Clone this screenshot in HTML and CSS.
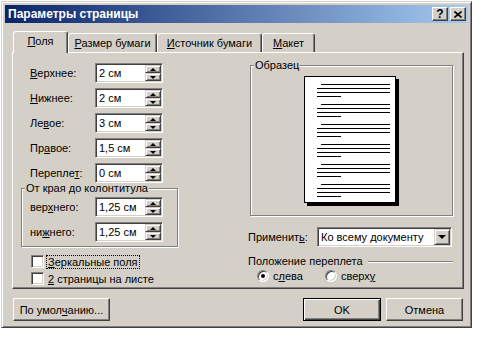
FILE: index.html
```html
<!DOCTYPE html>
<html lang="ru">
<head>
    <meta charset="UTF-8">
    <title>Параметры страницы</title>
    <link rel="stylesheet" href="styles.css">
</head>
<body>
    <div class="window">
        <div class="titlebar">
            <span class="title">Параметры страницы</span>
            <span class="tb-btn help">?</span>
            <span class="tb-btn close">
                <svg width="8" height="7" viewBox="0 0 8 7"><path d="M0.5 0.5L7.5 6.5M7.5 0.5L0.5 6.5" stroke="#000" stroke-width="1.6" fill="none"/></svg>
            </span>
        </div>

        <div class="dlg">
            <div class="tabs">
                <div class="tab sel t1"><u>П</u>оля</div>
                <div class="tab t2"><u>Р</u>азмер бумаги</div>
                <div class="tab t3"><u>И</u>сточник бумаги</div>
                <div class="tab t4"><u>М</u>акет</div>
            </div>

            <div class="panel">
                <div class="col-left">
                    <div class="rows">
                        <div class="row"><span class="lbl"><u>В</u>ерхнее:</span><div class="spin"><span class="spin-val">2 см</span><span class="spin-btns"><span class="sb up"></span><span class="sb down"></span></span></div></div>
                        <div class="row"><span class="lbl"><u>Н</u>ижнее:</span><div class="spin"><span class="spin-val">2 см</span><span class="spin-btns"><span class="sb up"></span><span class="sb down"></span></span></div></div>
                        <div class="row"><span class="lbl">Ле<u>в</u>ое:</span><div class="spin"><span class="spin-val">3 см</span><span class="spin-btns"><span class="sb up"></span><span class="sb down"></span></span></div></div>
                        <div class="row"><span class="lbl">Пр<u>а</u>вое:</span><div class="spin"><span class="spin-val">1,5 см</span><span class="spin-btns"><span class="sb up"></span><span class="sb down"></span></span></div></div>
                        <div class="row"><span class="lbl">Перепле<u>т</u>:</span><div class="spin"><span class="spin-val">0 см</span><span class="spin-btns"><span class="sb up"></span><span class="sb down"></span></span></div></div>
                    </div>

                    <fieldset class="group hf">
                        <legend>От края до колонтитула</legend>
                        <div class="rows">
                            <div class="row"><span class="lbl">вер<u>х</u>него:</span><div class="spin"><span class="spin-val">1,25 см</span><span class="spin-btns"><span class="sb up"></span><span class="sb down"></span></span></div></div>
                            <div class="row"><span class="lbl">ни<u>ж</u>него:</span><div class="spin"><span class="spin-val">1,25 см</span><span class="spin-btns"><span class="sb up"></span><span class="sb down"></span></span></div></div>
                        </div>
                    </fieldset>

                    <div class="checks">
                        <div class="check-row"><span class="checkbox"></span><span class="focus"><u>З</u>еркальные поля</span></div>
                        <div class="check-row"><span class="checkbox"></span><span class="nofocus"><u>2</u> страницы на листе</span></div>
                    </div>
                </div>

                <div class="col-right">
                    <fieldset class="group sample">
                        <legend>Образец</legend>
                        <!-- page preview -->
                        <svg class="page" width="95" height="130" viewBox="0 0 95 130">
                            <rect x="3" y="3" width="92" height="127" fill="#000"/>
                            <rect x="0.5" y="0.5" width="91" height="126" fill="#fff" stroke="#000"/>
                            <path stroke="#000" stroke-width="1" fill="none" d="
                                M17 8.5H86 M13 12.5H86 M13 16.5H86 M13 20.5H37
                                M17 28.5H86 M13 32.5H86 M13 36.5H86 M13 40.5H37
                                M17 48.5H86 M13 52.5H86 M13 56.5H86 M13 60.5H37
                                M17 68.5H86 M13 72.5H86 M13 76.5H86 M13 80.5H37
                                M17 88.5H86 M13 92.5H86 M13 96.5H86 M13 100.5H37
                                M17 108.5H86 M13 112.5H86 M13 116.5H86 M13 120.5H37"/>
                        </svg>
                    </fieldset>

                    <div class="apply-row">
                        <span class="lbl-apply">Применит<u>ь</u>:</span>
                        <div class="combo"><span class="combo-val">Ко всему документу</span><span class="combo-btn"></span></div>
                    </div>

                    <div class="etched-title">Положение переплета</div>
                    <div class="radios">
                        <div class="radio-item first"><span class="radio on"></span><span>с<u>л</u>ева</span></div>
                        <div class="radio-item"><span class="radio"></span><span>сверх<u>у</u></span></div>
                    </div>
                </div>
            </div>

            <div class="buttons">
                <button class="btn btn-def">По умол<u>ч</u>анию...</button>
                <span class="spacer"></span>
                <button class="btn btn-ok default">OK</button>
                <button class="btn btn-cancel">Отмена</button>
            </div>
        </div>
    </div>
</body>
</html>
```

FILE: styles.css
```css
* { box-sizing: border-box; }
body { margin: 0; background: #fff; font-family: "Liberation Sans", Arial, sans-serif; font-size: 11px; color: #000; }
u { text-decoration: underline; text-underline-offset: 1px; }

.window { margin: 1px 0 0 1px; width: 471px; height: 327px; background: #d4d0c8; padding: 3px;
    border: 1px solid; border-color: #d4d0c8 #404040 #404040 #d4d0c8;
    box-shadow: inset 1px 1px 0 #fff, inset -1px -1px 0 #808080; }

.titlebar { height: 18px; display: flex; align-items: center; padding: 0 2px 0 3px;
    background: linear-gradient(to right, #0a246a, #a6caf0); }
.title { flex: 1; color: #fff; font-weight: bold; font-size: 12px; }
.tb-btn { width: 16px; height: 14px; display: flex; align-items: center; justify-content: center; background: #d4d0c8;
    border: 1px solid; border-color: #fff #404040 #404040 #fff; box-shadow: inset -1px -1px 0 #808080; }
.help { margin-right: 2px; font-weight: bold; font-size: 12px; line-height: 12px; }

.dlg { padding: 8px 4px 0 7px; }

.tabs { display: flex; align-items: flex-end; height: 21px; margin-left: 1px; position: relative; z-index: 1; }
.tab { height: 19px; padding-top: 3px; line-height: 12px; text-align: center; background: #d4d0c8;
    border: 1px solid; border-bottom: none; border-color: #fff #404040 transparent #fff;
    border-radius: 3px 3px 0 0; box-shadow: inset -1px 0 0 #808080; }
.tab.sel { height: 22px; margin-bottom: -1px; }
.t1 { width: 55px; }
.t2 { width: 89px; }
.t3 { width: 105px; }
.t4 { width: 53px; }

.panel { height: 237px; display: grid; grid-template-columns: 157px 205px; column-gap: 70px; align-items: start;
    padding: 10px 0 0 8px; border: 1px solid; border-color: #fff #404040 #404040 #fff;
    box-shadow: inset -1px -1px 0 #808080; }

.rows { display: flex; flex-direction: column; gap: 5px; }
.row { display: flex; align-items: center; height: 20px; padding-left: 9px; }
.row .lbl { width: 65px; }

.spin, .combo { display: flex; height: 20px; background: #fff; padding: 1px;
    border: 1px solid; border-color: #808080 #fff #fff #808080;
    box-shadow: inset 1px 1px 0 #404040, inset -1px -1px 0 #d4d0c8; }
.spin { width: 68px; }
.spin-val, .combo-val { flex: 1; padding-left: 2px; line-height: 16px; white-space: nowrap; }
.spin-btns { width: 16px; display: flex; flex-direction: column; }
.sb, .combo-btn { display: flex; align-items: center; justify-content: center; background: #d4d0c8;
    border: 1px solid; border-color: #d4d0c8 #404040 #404040 #d4d0c8;
    box-shadow: inset 1px 1px 0 #fff, inset -1px -1px 0 #808080; }
.sb { flex: 1; }
.sb.up::after { content: ""; border-left: 3px solid transparent; border-right: 3px solid transparent; border-bottom: 3px solid #000; }
.sb.down::after { content: ""; border-left: 3px solid transparent; border-right: 3px solid transparent; border-top: 3px solid #000; }

.group { margin: 0; padding: 0; min-width: 0; border: 1px solid #808080;
    box-shadow: 1px 1px 0 #fff, inset 1px 1px 0 #fff; }
.group legend { padding: 0 1px; margin-left: 3px; line-height: 13px; background: #d4d0c8; }
.hf { margin-top: -1px; padding: 2px 0 4px; }
.hf .row { padding-left: 8px; }

.checks { margin-top: 8px; padding-left: 10px; display: flex; flex-direction: column; gap: 4px; }
.check-row { display: flex; align-items: center; height: 13px; gap: 2px; }
.checkbox { width: 13px; height: 13px; background: #fff; border: 1px solid; border-color: #808080 #fff #fff #808080;
    box-shadow: inset 1px 1px 0 #404040, inset -1px -1px 0 #d4d0c8; }
.focus, .nofocus { padding: 0 1px; line-height: 12px; border: 1px dotted #000; }
.nofocus { border-color: transparent; }

.sample { margin-left: 2px; margin-top: -4px; padding: 4px 0 9px; }
.page { display: block; margin: 0 auto; }

.apply-row { margin-top: 11px; display: flex; align-items: center; }
.lbl-apply { width: 69px; }
.combo { width: 135px; }
.combo-btn { width: 16px; }
.combo-btn::after { content: ""; border-left: 4px solid transparent; border-right: 4px solid transparent; border-top: 4px solid #000; }

.etched-title { margin-top: 8px; display: flex; align-items: center; line-height: 13px; }
.etched-title::after { content: ""; flex: 1; margin-left: 5px; border-top: 1px solid #808080; border-bottom: 1px solid #fff; }

.radios { margin-top: 1px; display: flex; align-items: center; height: 14px; padding-left: 9px; }
.radio-item { display: flex; align-items: center; gap: 4px; }
.radio-item.first { width: 68px; }
.radio { width: 12px; height: 12px; border-radius: 50%; background: #fff; display: flex; align-items: center; justify-content: center;
    border: 1px solid; border-color: #808080 #fff #fff #808080;
    box-shadow: inset 1px 1px 0 #404040, inset -1px -1px 0 #d4d0c8; }
.radio.on::after { content: ""; width: 4px; height: 4px; border-radius: 50%; background: #000; }

.buttons { display: flex; gap: 5px; margin-top: 9px; padding: 0 1px; }
.spacer { flex: 1; }
.btn { height: 23px; padding: 0; font: inherit; color: #000; background: #d4d0c8;
    border: 1px solid; border-color: #fff #404040 #404040 #fff;
    box-shadow: inset -1px -1px 0 #808080; }
.btn.default { border-color: #000; box-shadow: inset 1px 1px 0 #fff, inset -1px -1px 0 #404040, inset -2px -2px 0 #808080; }
.btn-def { width: 97px; }
.btn-ok { width: 78px; }
.btn-cancel { width: 77px; }
```
